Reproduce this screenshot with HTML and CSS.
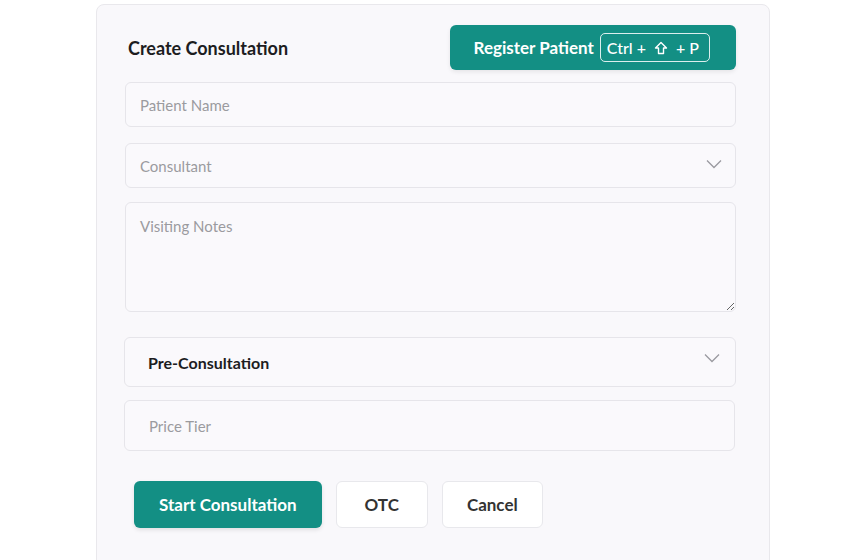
FILE: index.html
```html
<!DOCTYPE html>
<html lang="en">

<head>
    <meta charset="UTF-8">
    <meta name="viewport" content="width=device-width, initial-scale=1.0">
    <title>Create Consultation</title>
    <link rel="stylesheet" href="styles.css">
</head>

<body>
    <div class="card">
        <div class="header">
            <h1>Create Consultation</h1>
            <button type="button" class="button register">
                Register Patient
                <span class="kbd">Ctrl + <svg class="shift" viewBox="0 0 14 14" width="14" height="14"><path d="M7 1.5 L12.5 7 H9.5 V12.5 H4.5 V7 H1.5 Z" fill="none" stroke="#fff" stroke-width="1.4" stroke-linejoin="round"/></svg> + P</span>
            </button>
        </div>
        <form action="#" method="post">
            <input type="text" class="field" placeholder="Patient Name">
            <div class="select-wrap">
                <div class="field select placeholder">Consultant</div>
                <svg class="chevron" viewBox="0 0 16 10" width="16" height="10"><path d="M1 1.5 L8 8.5 L15 1.5" fill="none" stroke="#9a9aa0" stroke-width="1.3"/></svg>
            </div>
            <textarea class="field notes" placeholder="Visiting Notes"></textarea>

            <div class="select-wrap section">
                <div class="field select strong">Pre-Consultation</div>
                <svg class="chevron" viewBox="0 0 16 10" width="16" height="10"><path d="M1 1.5 L8 8.5 L15 1.5" fill="none" stroke="#9a9aa0" stroke-width="1.3"/></svg>
            </div>
            <input type="text" class="field tier" placeholder="Price Tier">

            <div class="button-container">
                <button type="submit" class="button primary">Start Consultation</button>
                <button type="button" class="button plain otc">OTC</button>
                <button type="button" class="button plain">Cancel</button>
            </div>
        </form>
    </div>
</body>

</html>
```

FILE: styles.css
```css
body {
    font-family: Lato, "Open Sans", sans-serif;
    background-color: #fff;
    margin: 0;
    padding: 0;
}

.card {
    width: 674px;
    height: 600px;
    margin: 4px 0 0 96px;
    box-sizing: border-box;
    background-color: #f9f8fb;
    border: 1px solid #e9e8ec;
    border-radius: 8px;
    padding: 20px 33px 0 28px;
}

.header {
    display: flex;
    justify-content: space-between;
    align-items: center;
    margin-bottom: 12px;
    padding-left: 3px;
}

h1 {
    margin: 0;
    font-size: 18px;
    font-weight: 700;
    color: #1d1d1f;
}

.button {
    font-family: inherit;
    border-radius: 6px;
    cursor: pointer;
}

.register {
    display: flex;
    align-items: center;
    gap: 6px;
    height: 45px;
    padding: 0 26px 0 24px;
    background-color: #138f84;
    color: #fff;
    border: none;
    font-size: 17px;
    font-weight: 700;
    box-shadow: 0 2px 4px rgba(0, 0, 0, 0.08);
}

.kbd {
    display: flex;
    align-items: center;
    gap: 6px;
    height: 27px;
    padding: 0 10px 0 6px;
    border: 1px solid rgba(255, 255, 255, 0.85);
    border-radius: 5px;
    font-size: 16px;
    font-weight: 500;
}

.shift {
    margin: 0 2px;
}

form {
    display: flex;
    flex-direction: column;
}

.field {
    display: block;
    width: 100%;
    height: 45px;
    box-sizing: border-box;
    padding: 0 14px;
    margin-bottom: 16px;
    background-color: #faf9fc;
    border: 1px solid #e6e5ea;
    border-radius: 6px;
    font-family: inherit;
    font-size: 15px;
    color: #333;
    outline: none;
}

.field::placeholder,
.placeholder {
    color: #9b9b9f;
}

.select {
    display: flex;
    align-items: center;
    margin-bottom: 0;
}

.select-wrap {
    position: relative;
    margin-bottom: 14px;
}

.chevron {
    position: absolute;
    right: 14px;
    top: 16px;
}

.notes {
    height: 110px;
    padding-top: 14px;
    resize: vertical;
    margin-bottom: 25px;
}

.section {
    margin-left: -1px;
    margin-bottom: 13px;
}

.section .select {
    height: 50px;
    padding-left: 23px;
}

.section .chevron {
    top: 16px;
    right: 16px;
}

.strong {
    font-size: 16px;
    font-weight: 700;
    color: #1d1d1f;
}

.tier {
    height: 51px;
    margin-left: -1px;
    padding-left: 24px;
}

.button-container {
    display: flex;
    gap: 14px;
    margin-top: 14px;
    padding-left: 9px;
}

.primary {
    height: 47px;
    padding: 0 25px;
    background-color: #138f84;
    color: #fff;
    border: none;
    font-size: 17px;
    font-weight: 700;
    box-shadow: 0 2px 4px rgba(0, 0, 0, 0.1);
}

.plain {
    height: 47px;
    padding: 0 24px;
    background-color: #fff;
    color: #333;
    border: 1px solid #e8e8ec;
    font-size: 17px;
    font-weight: 700;
}

.otc {
    padding: 0 28px;
}
```
